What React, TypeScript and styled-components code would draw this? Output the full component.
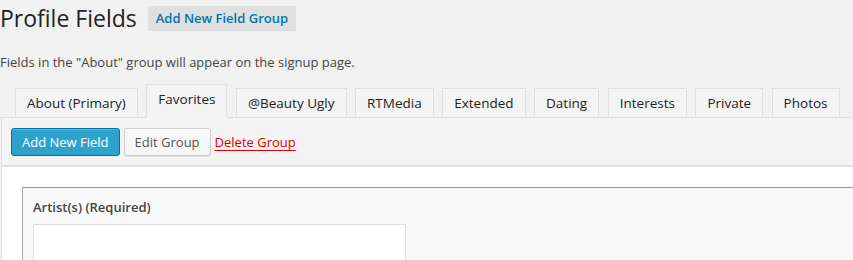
import React from 'react';
import styled, { createGlobalStyle } from 'styled-components';

const GlobalStyle = createGlobalStyle`
  html, body {
    margin: 0;
    padding: 0;
    background: #f1f1f1;
    font-family: "Open Sans", "Noto Sans", sans-serif;
    color: #444;
    overflow: hidden;
  }
`;

const Page = styled.div`
  width: 853px;
  height: 260px;
  overflow: hidden;
`;

const Header = styled.div`
  display: flex;
  align-items: center;
  gap: 11px;
  height: 36px;
`;

const Title = styled.h1`
  margin: 0;
  font-size: 23px;
  font-weight: 400;
  color: #222;
  line-height: 36px;
`;

const HeaderButton = styled.a`
  display: inline-flex;
  align-items: center;
  height: 25px;
  padding: 0 8px;
  background: #e0e0e0;
  color: #0073aa;
  font-size: 13px;
  font-weight: 600;
  text-decoration: none;
`;

const Description = styled.p`
  margin: 16px 0 0;
  font-size: 13px;
  line-height: 20px;
  color: #444;
`;

const Tabs = styled.ul`
  display: flex;
  align-items: flex-end;
  gap: 8.5px;
  list-style: none;
  margin: 11px 0 0;
  padding: 0 0 0 15px;
  height: 34px;
  border-bottom: 1px solid #dcdcdc;
`;

const Tab = styled.li<{ $active?: boolean }>`
  box-sizing: border-box;
  height: ${p => (p.$active ? '34px' : '30px')};
  margin-bottom: -1px;
  padding: ${p => (p.$active ? '0 11px 4px' : '0 11px')};
  display: flex;
  align-items: center;
  border: 1px solid #dfdfdf;
  border-bottom: ${p => (p.$active ? '1px solid #f4f4f4' : '1px solid #dcdcdc')};
  background: #f4f4f4;
  font-size: 13.5px;
  color: #222;
  white-space: nowrap;
`;

const Panel = styled.div`
  margin-left: 1px;
  border-left: 1px solid #e2e2e2;
  background: #f4f4f4;
`;

const Toolbar = styled.div`
  display: flex;
  align-items: center;
  gap: 4px;
  padding: 10px 9px 9px;
  border-bottom: 2px solid #e0e0e0;
`;

const Button = styled.a<{ $primary?: boolean }>`
  box-sizing: border-box;
  display: inline-flex;
  align-items: center;
  height: 28px;
  padding: 0 10px;
  border-radius: 3px;
  font-size: 13px;
  text-decoration: none;
  border: 1px solid ${p => (p.$primary ? '#0074a2' : '#cccccc')};
  background: ${p => (p.$primary ? '#2ea2cc' : '#f7f7f7')};
  color: ${p => (p.$primary ? '#fff' : '#555')};
  box-shadow: ${p =>
    p.$primary ? 'inset 0 1px 0 rgba(120,200,230,.5)' : 'inset 0 1px 0 #fff, 0 1px 0 rgba(0,0,0,.08)'};
`;

const DeleteLink = styled.a`
  font-size: 13px;
  color: #dd0000;
  text-decoration: underline;
  text-underline-offset: 3px;
`;

const FieldList = styled.div`
  background: #fff;
  padding: 20px 0 0 20px;
  height: 200px;
`;

const FieldBox = styled.div`
  border-top: 1px solid #999;
  border-left: 1px solid #aaa;
  background: #f9f9f9;
  padding: 10px 10px 0;
  height: 200px;
`;

const FieldLabel = styled.div`
  font-size: 13px;
  font-weight: 600;
  color: #444;
  line-height: 18px;
`;

const TextArea = styled.div`
  margin-top: 8px;
  width: 373px;
  height: 60px;
  background: #fff;
  border: 1px solid #dddddd;
  box-sizing: border-box;
`;

const tabs = ['About (Primary)', 'Favorites', '@Beauty Ugly', 'RTMedia', 'Extended', 'Dating', 'Interests', 'Private', 'Photos'];

export default function App() {
  return (
    <Page>
      <GlobalStyle />
      <Header>
        <Title>Profile Fields</Title>
        <HeaderButton>Add New Field Group</HeaderButton>
      </Header>
      <Description>Fields in the "About" group will appear on the signup page.</Description>
      <Tabs>
        {tabs.map(t => (
          <Tab key={t} $active={t === 'Favorites'}>
            {t}
          </Tab>
        ))}
      </Tabs>
      <Panel>
        <Toolbar>
          <Button $primary>Add New Field</Button>
          <Button>Edit Group</Button>
          <DeleteLink>Delete Group</DeleteLink>
        </Toolbar>
        <FieldList>
          <FieldBox>
            <FieldLabel>Artist(s) (Required)</FieldLabel>
            <TextArea />
          </FieldBox>
        </FieldList>
      </Panel>
    </Page>
  );
}
